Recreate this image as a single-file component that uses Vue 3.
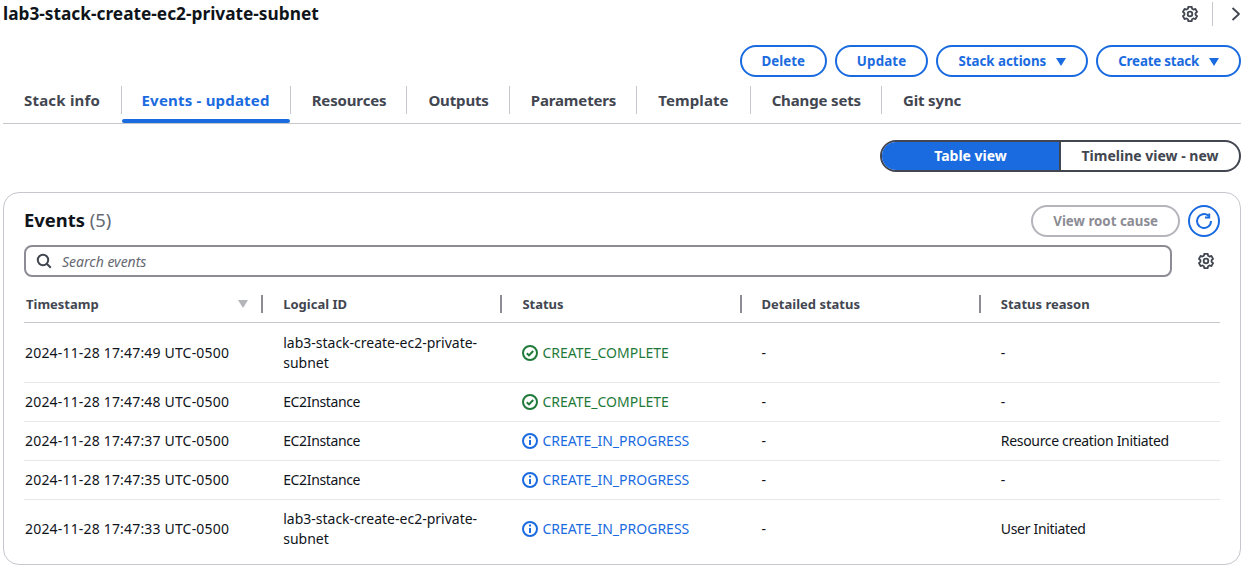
<script setup>
const tabs = ['Stack info', 'Events - updated', 'Resources', 'Outputs', 'Parameters', 'Template', 'Change sets', 'Git sync']
const columns = ['Timestamp', 'Logical ID', 'Status', 'Detailed status', 'Status reason']
const longId = 'lab3-stack-create-ec2-private-subnet'
const rows = [
  { time: '2024-11-28 17:47:49 UTC-0500', id: longId, status: 'CREATE_COMPLETE', ok: true, reason: '-', tall: true },
  { time: '2024-11-28 17:47:48 UTC-0500', id: 'EC2Instance', status: 'CREATE_COMPLETE', ok: true, reason: '-' },
  { time: '2024-11-28 17:47:37 UTC-0500', id: 'EC2Instance', status: 'CREATE_IN_PROGRESS', ok: false, reason: 'Resource creation Initiated' },
  { time: '2024-11-28 17:47:35 UTC-0500', id: 'EC2Instance', status: 'CREATE_IN_PROGRESS', ok: false, reason: '-' },
  { time: '2024-11-28 17:47:33 UTC-0500', id: longId, status: 'CREATE_IN_PROGRESS', ok: false, reason: 'User Initiated', tall: true }
]
// six rounded teeth, one pointing straight up
const gear = (() => {
  const pt = (r, deg) => {
    const a = (deg * Math.PI) / 180
    return `${(8 + r * Math.sin(a)).toFixed(2)} ${(8 - r * Math.cos(a)).toFixed(2)}`
  }
  const parts = []
  for (let i = 0; i < 6; i++) {
    const c = i * 60
    parts.push(pt(7.4, c - 13), pt(7.4, c + 13), pt(5.6, c + 22), pt(5.6, c + 38))
  }
  return 'M' + parts.join('L') + 'Z'
})()
</script>

<template>
  <div class="page">
    <header class="top">
      <h1>lab3-stack-create-ec2-private-subnet</h1>
      <div class="top-tools">
        <svg class="icon gear" viewBox="0 0 16 16"><path :d="gear" /><circle cx="8" cy="8" r="2.3" /></svg>
        <span class="rule"></span>
        <svg class="icon chev" viewBox="0 0 16 16"><path d="M4.5 2 11 8 4.5 14" /></svg>
      </div>
    </header>

    <div class="actions">
      <button class="btn">Delete</button>
      <button class="btn wide">Update</button>
      <button class="btn drop">Stack actions <i class="caret"></i></button>
      <button class="btn drop tight">Create stack <i class="caret"></i></button>
    </div>

    <nav class="tabs">
      <div v-for="(t, i) in tabs" :key="t" class="tab" :class="{ active: i === 1 }"><span>{{ t }}</span></div>
    </nav>

    <div class="seg-row">
      <div class="seg">
        <div class="seg-item on">Table view</div>
        <div class="seg-item">Timeline view - new</div>
      </div>
    </div>

    <section class="card">
      <div class="card-head">
        <h2>Events <span>(5)</span></h2>
        <button class="btn disabled">View root cause</button>
        <button class="round">
          <svg viewBox="0 0 16 16"><path d="M15 8A7 7 0 1 1 12.5 2.7" /><path d="M13.2 .4V4.6H9" /></svg>
        </button>
      </div>
      <div class="search-row">
        <div class="search">
          <svg viewBox="0 0 16 16"><circle cx="7" cy="7" r="5.2" /><path d="m11 11 3.8 3.8" /></svg>
          <span>Search events</span>
        </div>
        <svg class="icon gear small" viewBox="0 0 16 16"><path :d="gear" /><circle cx="8" cy="8" r="2.3" /></svg>
      </div>
      <div class="table">
        <div class="row head">
          <div v-for="(c, i) in columns" :key="c" class="th">
            {{ c }}
            <i v-if="i === 0" class="sort"></i>
            <b v-if="i < 4" class="sep"></b>
          </div>
        </div>
        <div v-for="r in rows" :key="r.time" class="row body" :class="{ tall: r.tall }">
          <div class="td time">{{ r.time }}</div>
          <div class="td id">{{ r.id }}</div>
          <div class="td status" :class="r.ok ? 'ok' : 'info'">
            <svg v-if="r.ok" viewBox="0 0 16 16"><circle cx="8" cy="8" r="7" /><path d="m4.8 8.2 2.2 2.2 4.2-4.4" /></svg>
            <svg v-else viewBox="0 0 16 16"><circle cx="8" cy="8" r="7" /><path d="M8 7v5" /><path d="M8 3.6v1.8" /></svg>
            {{ r.status }}
          </div>
          <div class="td">-</div>
          <div class="td reason">{{ r.reason }}</div>
        </div>
      </div>
    </section>
  </div>
</template>

<style>
html, body { margin: 0; background: #fff; }
</style>

<style scoped>
.page {
  width: 1245px; height: 568px; overflow: hidden; box-sizing: border-box;
  padding: 0 4px 0 3px;
  font-family: "Noto Sans", "Open Sans", sans-serif; font-size: 14px; color: #0f141a;
}
.top { height: 28px; display: flex; align-items: center; justify-content: space-between; }
h1 { margin: 0 0 2px; font-size: 17.3px; font-weight: 700; color: #0f141a; }
.top-tools { display: flex; align-items: center; }
.icon { fill: none; stroke: #424650; stroke-width: 1.8; stroke-linejoin: round; }
.gear { width: 16px; height: 16px; }
.rule { width: 1px; height: 24px; background: #c6c6cd; margin: 0 15px 0 14px; }
.chev { width: 16px; height: 16px; margin-right: -3px; }

.actions { display: flex; justify-content: flex-end; gap: 8px; margin-top: 17px; }
.btn {
  height: 32px; box-sizing: border-box; border: 2px solid #1a6be0; border-radius: 16px; background: #fff;
  padding: 0 20px 1px; color: #1a6be0; font: 700 13.3px "Noto Sans", "Open Sans", sans-serif; white-space: nowrap;
  display: flex; align-items: center;
}
.btn.wide { letter-spacing: .17px; }
.btn.tight { letter-spacing: -.17px; }
.caret {
  width: 0; height: 0; margin: 2px 0 0 10px; border-left: 5.5px solid transparent; border-right: 5.5px solid transparent;
  border-top: 8px solid #1a6be0;
}
.tabs { display: flex; height: 38px; margin-top: 8px; border-bottom: 1px solid #c6c6cd; box-sizing: content-box; }
.tab {
  position: relative; height: 38px; padding: 0 20px 0 22px; display: flex; align-items: flex-start; font-weight: 700; font-size: 15px;
  color: #424650; box-sizing: border-box; letter-spacing: -.15px;
}
.tab:nth-child(1) { letter-spacing: .2px; padding: 0 20.4px 0 21px; }
.tab:nth-child(2) { letter-spacing: .2px; padding: 0 20px 0 21px; }
.tab:nth-child(6) { letter-spacing: .1px; padding: 0 21px 0 22px; }
.tab span { line-height: 31px; }
.tab + .tab::before {
  content: ""; position: absolute; left: 0; top: 1px; height: 28px; width: 1px; background: #c6c6cd;
}
.tab.active { color: #1a6be0; }
.tab.active::after {
  content: ""; position: absolute; left: 1px; right: 0; bottom: 0; height: 4px; border-radius: 2px; background: #1a6be0;
}
.seg-row { display: flex; justify-content: flex-end; margin-top: 16px; }
.seg { display: flex; height: 32px; box-sizing: border-box; border: 2px solid #424650; border-radius: 16px; overflow: hidden; }
.seg-item { display: flex; align-items: center; justify-content: center; font-weight: 700; font-size: 14px; color: #424650; width: 178px; box-sizing: border-box; padding-bottom: 2px; }
.seg-item.on { background: #1a6be0; color: #fff; border-right: 2px solid #424650; width: 179px; }

.card { margin-top: 20px; height: 373px; box-sizing: border-box; border: 1px solid #c6c6cd; border-radius: 16px; padding: 12px 20px 0 20px; }
.card-head { display: flex; align-items: center; height: 32px; }
h2 { margin: 0 auto 4px 0; font-size: 18.4px; font-weight: 700; color: #0f141a; }
h2 span { font-weight: 400; color: #656871; }
.btn.disabled { border-color: #b4b4bb; color: #8c8c94; }
.round {
  width: 32px; height: 32px; margin-left: 8px; box-sizing: border-box; padding: 0; border: 2px solid #1a6be0; border-radius: 50%;
  background: #fff; display: flex; align-items: center; justify-content: center;
}
.round svg { width: 16px; height: 16px; fill: none; stroke: #1a6be0; stroke-width: 2; overflow: visible; }
.search-row { display: flex; align-items: center; margin-top: 8px; }
.search {
  width: 1148px; height: 32px; box-sizing: border-box; border: 2px solid #8c8c94; border-radius: 8px; display: flex; align-items: center;
  padding-left: 10px; color: #656871; font-style: italic; font-size: 14px;
}
.search svg { width: 16px; height: 16px; margin-right: 10px; fill: none; stroke: #424650; stroke-width: 2; }
.small { margin-left: 26px; }
.table { margin-top: 13px; }
.row { display: grid; grid-template-columns: repeat(5, 1fr); width: 1196px; }
.head { height: 33px; box-sizing: border-box; border-bottom: 1px solid #c6c6cd; }
.th { position: relative; display: flex; align-items: center; padding-left: 20px; font-weight: 700; font-size: 13px; color: #424650; height: 28px; }
.th:first-child { padding-left: 2px; }
.sort {
  position: absolute; right: 15px; top: 10px; width: 0; height: 0;
  border-left: 5px solid transparent; border-right: 5px solid transparent; border-top: 8px solid #b4b4bb;
}
.sep { position: absolute; right: 0; top: 5px; width: 2px; height: 18px; background: #8c8c94; }
.body { border-bottom: 1px solid #e8e8ec; height: 39px; box-sizing: border-box; }
.body.tall { height: 60px; }
.body:last-child { border-bottom: 0; height: 58px; }
.td { display: flex; align-items: center; padding: 0 20px; line-height: 20px; font-size: 14px; }
.td.time { padding-left: 1px; letter-spacing: .18px; }
.body:not(.tall) .id { letter-spacing: -.36px; }
.reason { letter-spacing: -.32px; }
.status svg { width: 16px; height: 16px; margin-right: 4px; flex: none; fill: none; stroke: currentColor; stroke-width: 2; }
.ok { color: #1f7a3a; }
.info { color: #1a6be0; }
</style>
